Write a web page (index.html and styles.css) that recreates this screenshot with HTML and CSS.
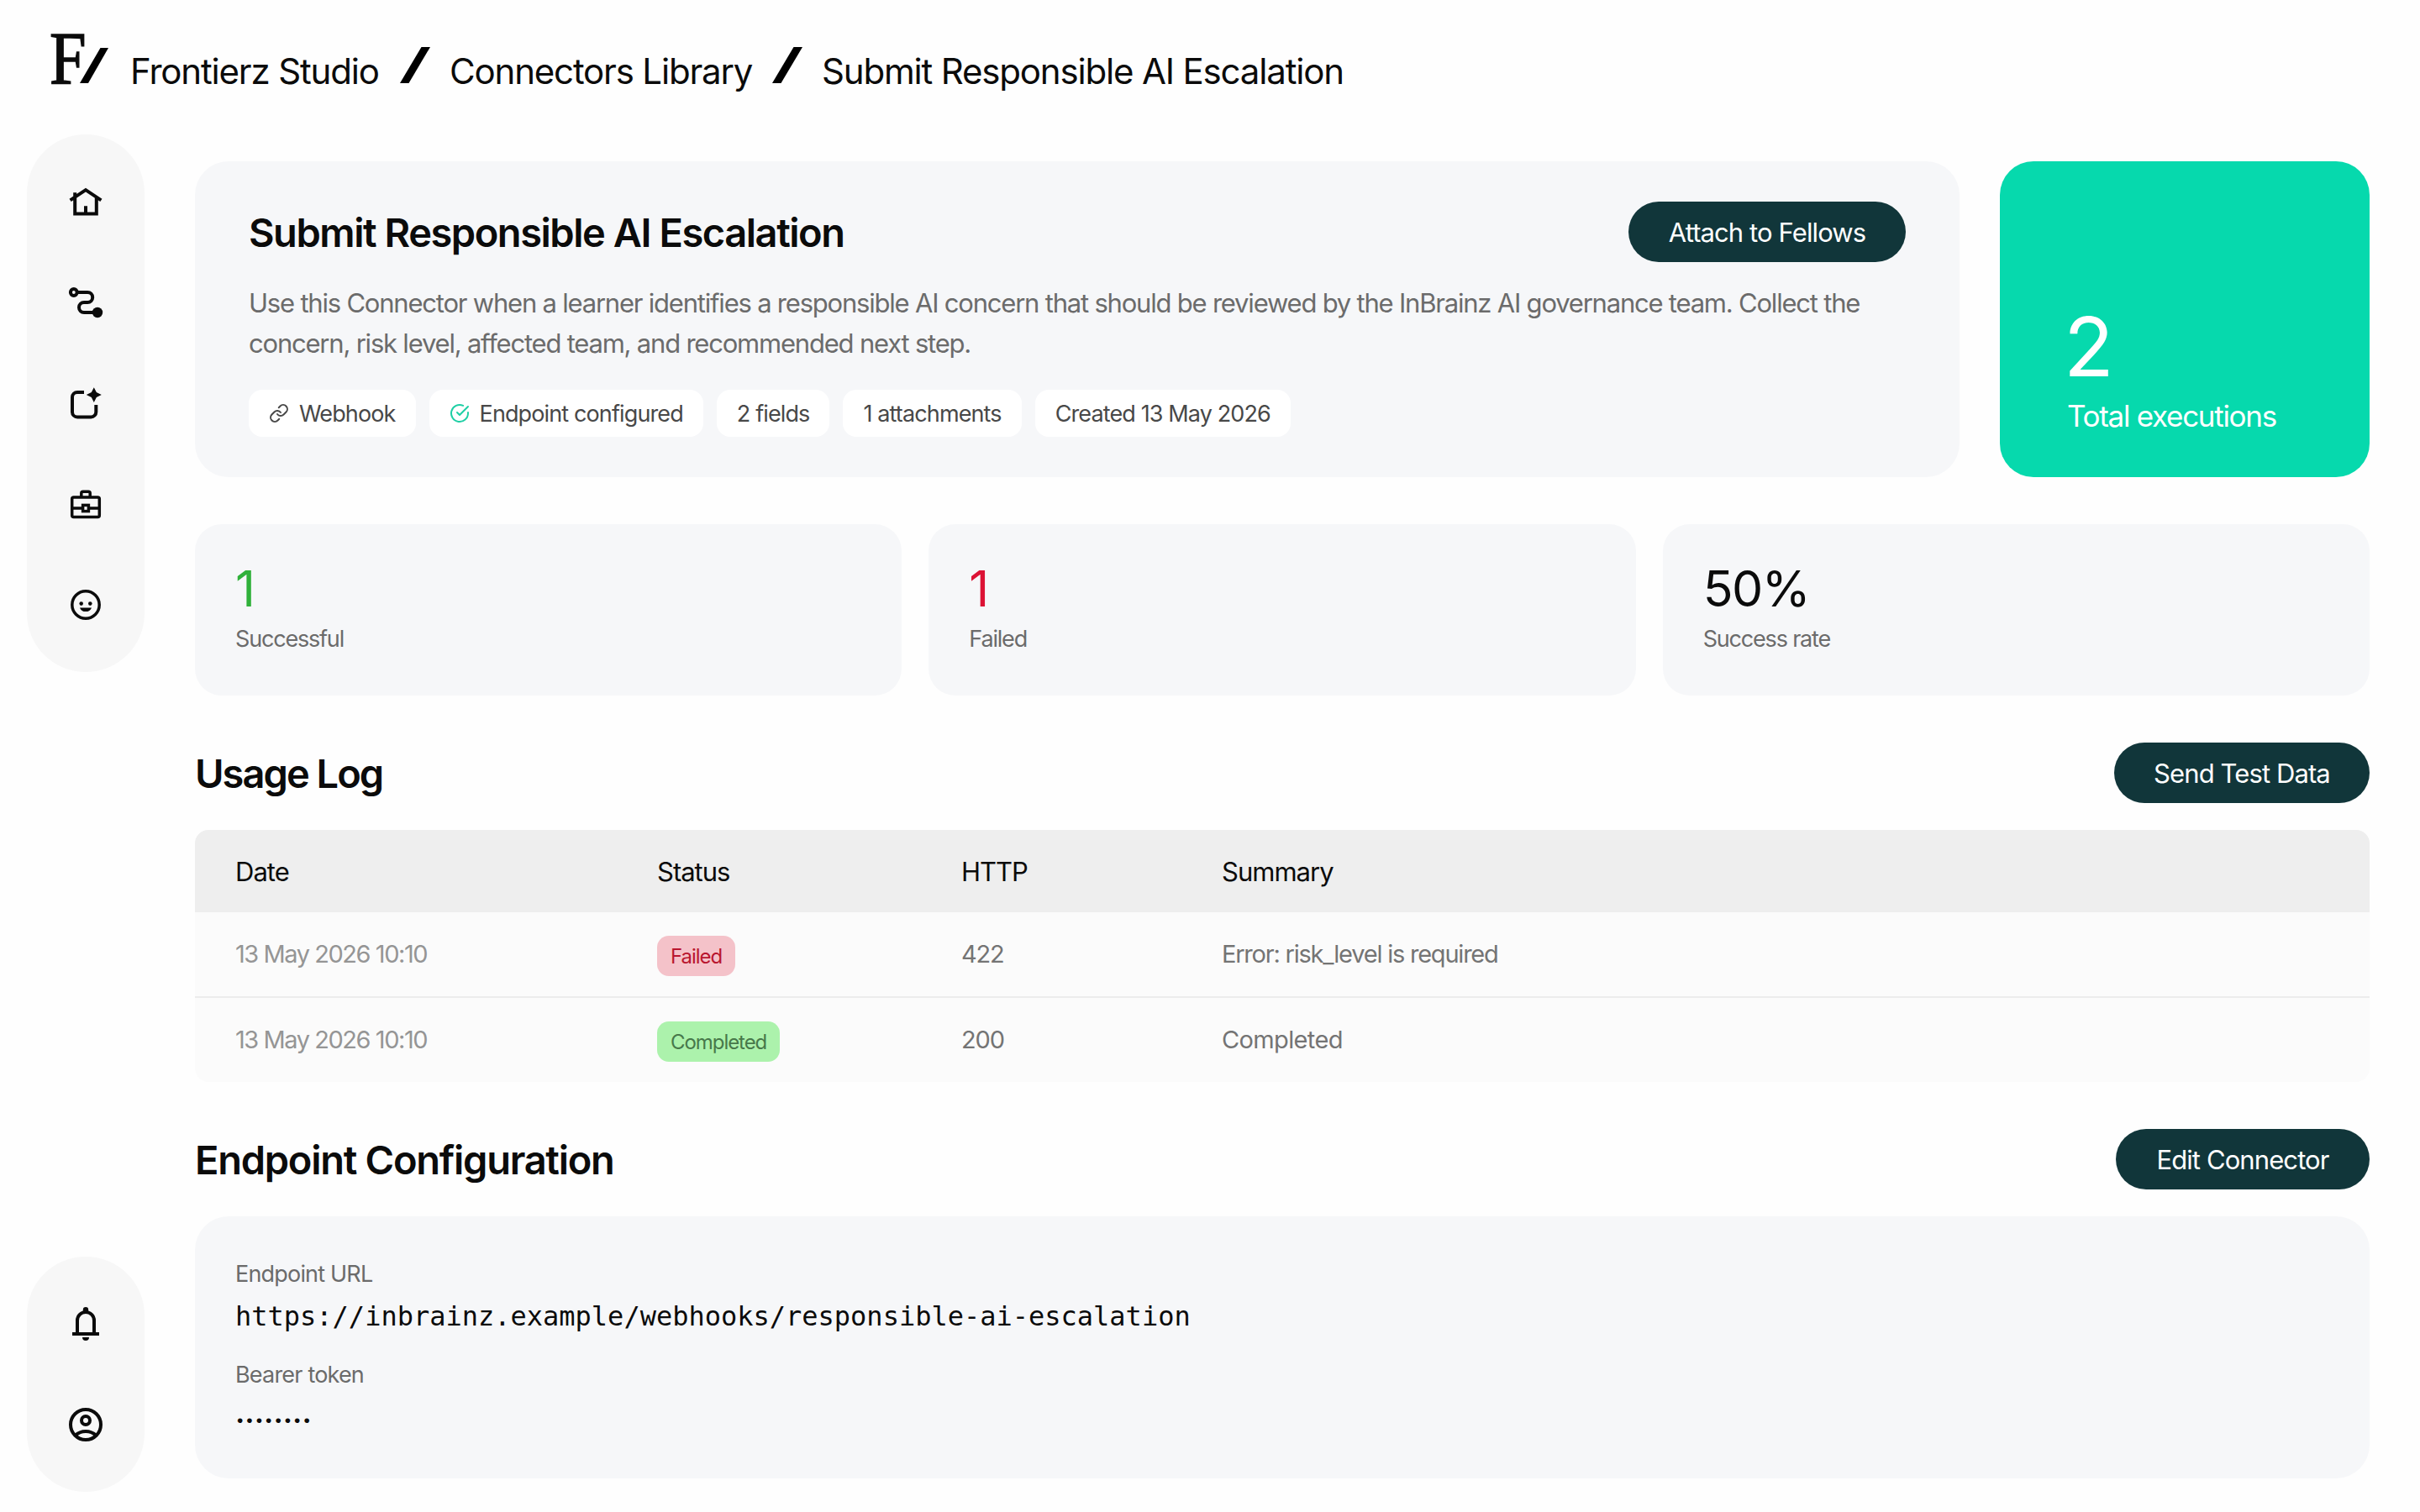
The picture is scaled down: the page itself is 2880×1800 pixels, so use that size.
FILE: index.html
```html
<!DOCTYPE html>
<html lang="en">

<head>
  <meta charset="UTF-8">
  <title>Submit Responsible AI Escalation - Frontierz Studio</title>
  <link rel="stylesheet" href="styles.css">
</head>

<body>
  <header class="topbar">
    <a class="logo" href="#">
      <span class="logo-letter">F</span>
      <svg class="logo-slash" viewBox="0 0 34 42"><path d="M24.5 0H34L10 42H0z"/></svg>
    </a>
    <nav class="breadcrumb">
      <a class="crumb crumb-home" href="#">Frontierz Studio</a>
      <svg class="crumb-slash" viewBox="0 0 36 43"><path d="M25.5 0H36L10.5 43H0z"/></svg>
      <a class="crumb crumb-library" href="#">Connectors Library</a>
      <svg class="crumb-slash" viewBox="0 0 36 43"><path d="M25.5 0H36L10.5 43H0z"/></svg>
      <span class="crumb crumb-current">Submit Responsible AI Escalation</span>
    </nav>
  </header>

  <div class="layout">
    <aside class="sidebar">
      <nav class="side-nav">
        <!-- home -->
        <svg class="icon" viewBox="0 0 48 48">
          <path d="M5.6 22.4L24 10.2l18.4 12.2M11.2 13.2v25.2h25.6V19M24 38V29.2"/>
        </svg>
        <!-- journeys -->
        <svg class="icon" viewBox="0 0 48 48">
          <circle cx="9.8" cy="12" r="3.9"/>
          <path d="M14 12h12.2a6 6 0 0 1 0 12H22a6 6 0 0 0 0 12h14"/>
          <circle class="solid" cx="38" cy="36" r="6.2"/>
        </svg>
        <!-- create -->
        <svg class="icon" viewBox="0 0 48 48">
          <path d="M22 11h-8a6 6 0 0 0-6 6v17.4a6 6 0 0 0 6 6h16.3a6 6 0 0 0 6-6V26"/>
          <path class="solid" d="M33.8 5.2l3 5.9 6 3-6 3-3 5.9-3-5.9-6-3 6-3z"/>
        </svg>
        <!-- toolbox -->
        <svg class="icon icon-thin" viewBox="0 0 48 48">
          <rect x="7.7" y="16" width="32.6" height="23.4" rx="2"/>
          <path d="M18.8 16v-4.8a2 2 0 0 1 2-2h6.4a2 2 0 0 1 2 2V16M8 29h12M28 29h12"/>
          <rect x="20.6" y="25.4" width="6.8" height="7.2"/>
        </svg>
        <!-- fellows -->
        <svg class="icon icon-thin" viewBox="0 0 48 48">
          <circle cx="24" cy="24" r="16.2"/>
          <circle class="solid" cx="18.7" cy="22.6" r="2.3"/>
          <circle class="solid" cx="29.3" cy="22.6" r="2.3"/>
          <path class="solid" d="M17 27.4h14c-1 3-3.6 4.7-7 4.7s-6-1.7-7-4.7z"/>
        </svg>
      </nav>

      <nav class="side-nav">
        <!-- notifications -->
        <svg class="icon" viewBox="0 0 48 48">
          <path d="M14 35V20a10 10 0 0 1 20 0v15M8 36h32"/>
          <path class="solid" d="M20.8 9V7.2a3.2 3.2 0 0 1 6.4 0V9zM20 40h8a4 4 0 0 1-8 0z"/>
        </svg>
        <!-- account -->
        <svg class="icon" viewBox="0 0 48 48">
          <circle cx="24" cy="24" r="18"/>
          <circle cx="24" cy="19" r="5"/>
          <path d="M11.5 37c3.4-3.2 7.6-5 12.5-5s9.1 1.8 12.5 5"/>
        </svg>
      </nav>
    </aside>

    <main class="content">
      <section class="overview">
        <div class="hero">
          <div class="hero-head">
            <h1>Submit Responsible AI Escalation</h1>
            <button class="btn btn-attach">Attach to Fellows</button>
          </div>
          <p class="hero-text">Use this Connector when a learner identifies a responsible AI concern that should be reviewed by the InBrainz AI governance team. Collect the concern, risk level, affected team, and recommended next step.</p>
          <div class="chips">
            <span class="chip">
              <svg class="chip-icon" viewBox="0 0 24 24">
                <path d="M10 13a5 5 0 0 0 7.54.54l3-3a5 5 0 0 0-7.07-7.07l-1.72 1.71"/>
                <path d="M14 11a5 5 0 0 0-7.54-.54l-3 3a5 5 0 0 0 7.07 7.07l1.71-1.71"/>
              </svg>
              Webhook
            </span>
            <span class="chip">
              <svg class="chip-icon chip-icon-ok" viewBox="0 0 24 24">
                <path d="M22 11.08V12a10 10 0 1 1-5.93-9.14"/>
                <path d="M22 4L12 14.01l-3-3"/>
              </svg>
              Endpoint configured
            </span>
            <span class="chip">2 fields</span>
            <span class="chip">1 attachments</span>
            <span class="chip">Created 13 May 2026</span>
          </div>
        </div>
        <div class="total-card">
          <div class="total-value">2</div>
          <div class="total-label">Total executions</div>
        </div>
      </section>

      <section class="stats">
        <div class="stat">
          <div class="stat-value success">1</div>
          <div class="stat-label">Successful</div>
        </div>
        <div class="stat">
          <div class="stat-value danger">1</div>
          <div class="stat-label">Failed</div>
        </div>
        <div class="stat">
          <div class="stat-value">50%</div>
          <div class="stat-label">Success rate</div>
        </div>
      </section>

      <section class="section">
        <div class="section-head">
          <h2 class="title-log">Usage Log</h2>
          <button class="btn btn-test">Send Test Data</button>
        </div>
        <table class="log">
          <thead>
            <tr>
              <th class="col-date">Date</th>
              <th class="col-status">Status</th>
              <th class="col-http">HTTP</th>
              <th>Summary</th>
            </tr>
          </thead>
          <tbody>
            <tr>
              <td class="date">13 May 2026 10:10</td>
              <td><span class="badge badge-failed">Failed</span></td>
              <td class="code">422</td>
              <td class="error">Error: risk_level is required</td>
            </tr>
            <tr>
              <td class="date">13 May 2026 10:10</td>
              <td><span class="badge badge-completed">Completed</span></td>
              <td class="code">200</td>
              <td>Completed</td>
            </tr>
          </tbody>
        </table>
      </section>

      <section class="section">
        <div class="section-head">
          <h2>Endpoint Configuration</h2>
          <button class="btn btn-edit">Edit Connector</button>
        </div>
        <div class="config">
          <div class="config-label">Endpoint URL</div>
          <div class="config-url">https://inbrainz.example/webhooks/responsible-ai-escalation</div>
          <div class="config-label">Bearer token</div>
          <div class="config-token">••••••••</div>
        </div>
      </section>
    </main>
  </div>
</body>

</html>
```
FILE: styles.css
```css
* {
  margin: 0;
  padding: 0;
  box-sizing: border-box;
}

body {
  font-family: Inter, 'Liberation Sans', sans-serif;
  background: #fefefe;
  color: #0b0b0b;
  min-height: 100vh;
}

a {
  color: inherit;
  text-decoration: none;
}

/* top bar */
.topbar {
  display: flex;
  align-items: flex-start;
  height: 160px;
  padding: 40px 60px 0;
}

.logo {
  display: flex;
  align-items: flex-end;
  width: 70px;
  height: 59px;
  margin-right: 25px;
}

.logo-letter {
  width: 35px;
  margin-left: -1px;
  margin-right: 1px;
  margin-bottom: 9px;
  font-family: 'Liberation Serif', serif;
  font-size: 89px;
  line-height: 42px;
  transform: scaleX(0.88);
  transform-origin: left;
  -webkit-text-stroke: 1.5px #0b0b0b;
}

.logo-slash {
  width: 34px;
  height: 42px;
  flex: none;
}

.breadcrumb {
  display: flex;
  align-items: flex-end;
  height: 59px;
}

.crumb {
  font-size: 42px;
  line-height: 42px;
  letter-spacing: -0.028em;
  white-space: nowrap;
  margin-bottom: -7px;
}

.crumb-home {
  width: 298px;
}

.crumb-library {
  width: 361px;
}

.crumb-slash {
  width: 36px;
  height: 43px;
  margin-left: 23px;
  margin-right: 23px;
}

/* sidebar */
.layout {
  display: flex;
}

.sidebar {
  display: flex;
  flex-direction: column;
  justify-content: space-between;
  width: 140px;
  height: 1616px;
  margin-left: 32px;
  flex: none;
}

.side-nav {
  display: flex;
  flex-direction: column;
  align-items: center;
  gap: 72px;
  padding: 56px 0;
  border-radius: 70px;
  background: #f7f7f7;
}

.icon {
  width: 48px;
  height: 48px;
  fill: none;
  stroke: #0b0b0b;
  stroke-width: 4;
}

.icon-thin {
  stroke-width: 3.5;
}

.icon .solid {
  fill: #0b0b0b;
  stroke: none;
}

/* content */
.content {
  flex: 1;
  padding: 32px 60px 40px;
}

.overview {
  display: flex;
  gap: 48px;
}

.hero {
  flex: 1;
  height: 376px;
  padding: 48px 64px;
  border-radius: 40px;
  background: #f6f7f9;
}

.hero-head,
.section-head {
  display: flex;
  align-items: center;
  justify-content: space-between;
  height: 72px;
}

h1,
h2 {
  font-size: 47px;
  font-weight: 580;
  line-height: 55px;
  letter-spacing: -0.031em;
  white-space: nowrap;
}

h2 {
  letter-spacing: -0.027em;
}

.title-log {
  letter-spacing: -0.042em;
}

.btn {
  height: 72px;
  border: none;
  border-radius: 36px;
  background: #11363a;
  color: #fff;
  font-family: inherit;
  font-size: 31px;
  letter-spacing: -0.029em;
  white-space: nowrap;
  cursor: pointer;
}

.btn-attach {
  width: 330px;
}

.btn-test {
  width: 304px;
}

.btn-edit {
  width: 302px;
}

.hero-text {
  margin-top: 25px;
  font-size: 31px;
  line-height: 48px;
  letter-spacing: -0.039em;
  color: #6b6b6b;
}

.chips {
  display: flex;
  gap: 16px;
  margin-top: 31px;
}

.chip {
  display: flex;
  align-items: center;
  gap: 12px;
  height: 56px;
  padding: 0 24px;
  border-radius: 16px;
  background: #fff;
  color: #484848;
  font-size: 27px;
  letter-spacing: -0.0325em;
  white-space: nowrap;
}

.chip-icon {
  width: 24px;
  height: 24px;
  fill: none;
  stroke: #484848;
  stroke-width: 2;
  stroke-linecap: round;
  stroke-linejoin: round;
}

.chip-icon-ok {
  stroke: #1fcfa5;
}

.total-card {
  display: flex;
  flex-direction: column;
  justify-content: flex-end;
  width: 440px;
  padding: 48px 80px;
  border-radius: 40px;
  background: #06d9ad;
  color: #fff;
}

.total-value {
  font-size: 98px;
  line-height: 96px;
  margin-left: -4px;
  margin-bottom: 9px;
}

.total-label {
  font-size: 35px;
  line-height: 50px;
  letter-spacing: -0.037em;
  white-space: nowrap;
}

.stats {
  display: grid;
  grid-template-columns: repeat(3, 1fr);
  gap: 32px;
  margin-top: 56px;
}

.stat {
  height: 204px;
  padding: 48px;
  border-radius: 32px;
  background: #f6f7f9;
}

.stat-value {
  font-size: 59px;
  line-height: 58px;
  letter-spacing: -0.025em;
}

.stat-value.success {
  color: #2fb13a;
}

.stat-value.danger {
  color: #dc1235;
}

.stat-label,
.config-label {
  font-size: 27px;
  line-height: 42px;
  letter-spacing: -0.03em;
  color: #6b6b6b;
}

.stat-label {
  margin-top: 10px;
  letter-spacing: -0.044em;
}

.section {
  margin-top: 56px;
}

/* usage log */
.log {
  width: 100%;
  margin-top: 32px;
  border-spacing: 0;
  border-radius: 16px;
  overflow: hidden;
  table-layout: fixed;
  background: #fbfbfb;
}

.log th {
  height: 98px;
  padding-left: 48px;
  background: #eee;
  font-size: 31px;
  font-weight: 400;
  letter-spacing: -0.032em;
  text-align: left;
}

.log td {
  height: 100px;
  padding-left: 48px;
  font-size: 29px;
  line-height: 48px;
  letter-spacing: -0.022em;
  color: #747474;
}

.log tbody tr:first-child td {
  height: 102px;
  border-bottom: 2px solid #ececec;
}

.col-date {
  width: 502px;
}

.col-status {
  width: 362px;
}

.col-http {
  width: 310px;
}

.log td.date {
  color: #959595;
  letter-spacing: -0.05em;
}

.log td.code {
  letter-spacing: -0.04em;
}

.log td.error {
  letter-spacing: -0.042em;
}

.badge {
  display: block;
  width: fit-content;
  height: 48px;
  margin-top: 4px;
  padding: 0 16px;
  border-radius: 14px;
  font-size: 24px;
  line-height: 49px;
  letter-spacing: -0.044em;
}

.badge-failed {
  background: #f4c2c9;
  color: #b9162f;
}

.badge-completed {
  background: #acf2ac;
  color: #47784a;
}

/* endpoint configuration */
.config {
  height: 312px;
  margin-top: 32px;
  padding: 48px;
  border-radius: 40px;
  background: #f6f7f9;
}

.config-url {
  margin-top: 6px;
  margin-bottom: 26px;
  font-family: 'DejaVu Sans Mono', monospace;
  font-size: 32px;
  line-height: 46px;
}

.config-token {
  margin-top: 10px;
  padding-left: 2px;
  font-family: 'Liberation Sans', sans-serif;
  font-size: 21px;
  line-height: 46px;
  letter-spacing: 4px;
}
```
